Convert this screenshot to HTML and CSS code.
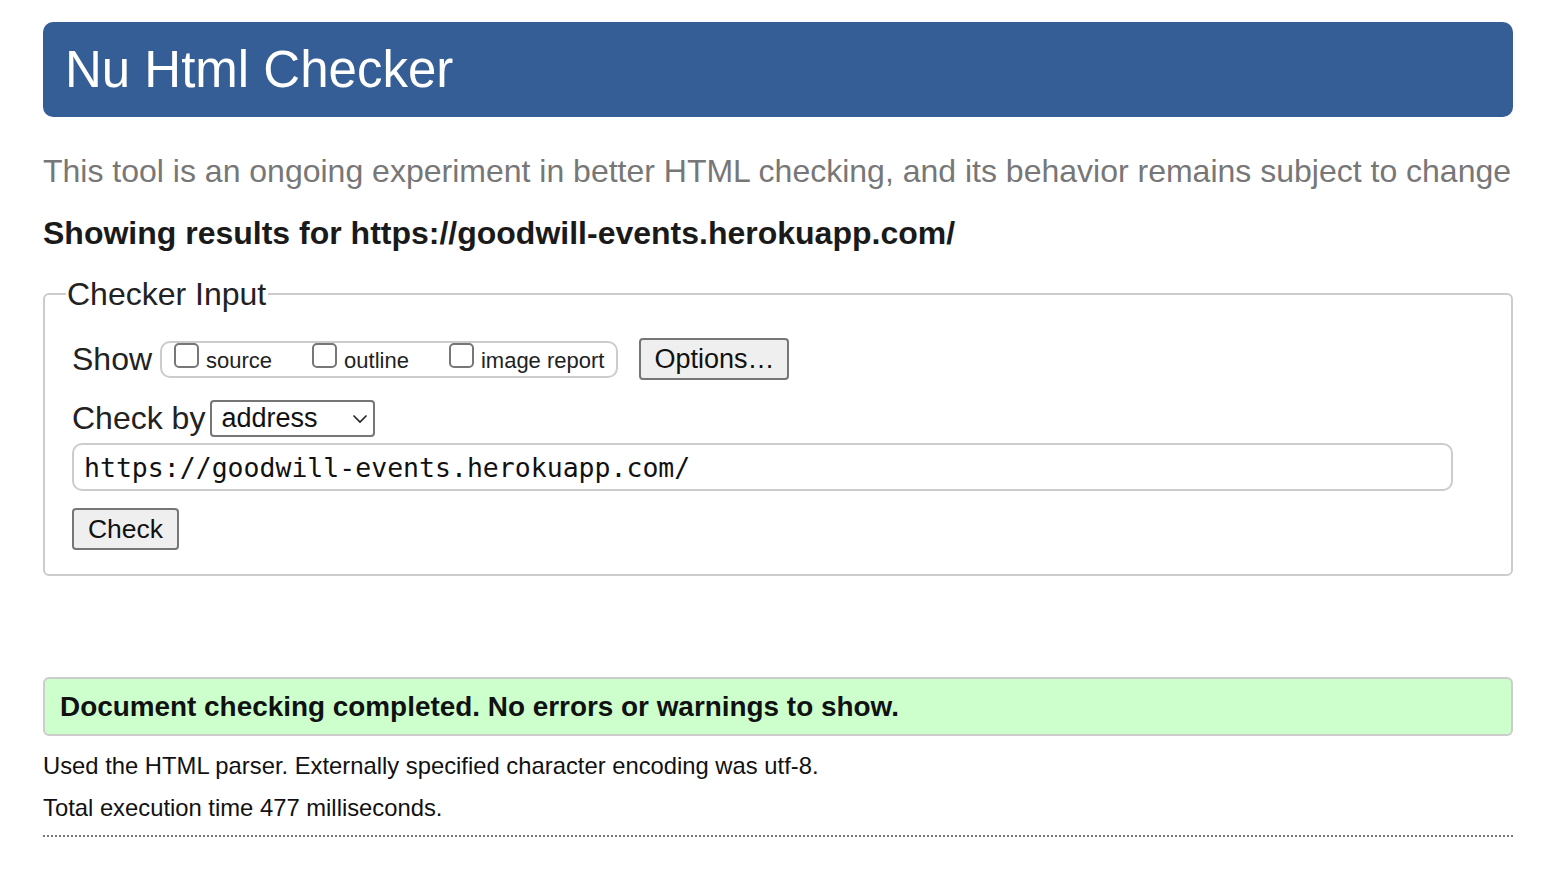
FILE: index.html
```html
<!DOCTYPE html>
<html lang="en">
<head>
<meta charset="utf-8">
<title>Nu Html Checker</title>
<link rel="stylesheet" href="styles.css">
</head>
<body>
<h1 class="banner">Nu Html Checker</h1>
<p class="intro">This tool is an ongoing experiment in better HTML checking, and its behavior remains subject to change</p>
<h2 class="showing">Showing results for https://goodwill-events.herokuapp.com/</h2>
<fieldset class="checker">
  <legend class="legend">Checker Input</legend>
  <div class="row show-row">
    <span class="row-label">Show</span>
    <div class="opts">
      <label class="opt"><input type="checkbox" class="cb"><span>source</span></label>
      <label class="opt"><input type="checkbox" class="cb"><span>outline</span></label>
      <label class="opt"><input type="checkbox" class="cb"><span>image report</span></label>
    </div>
    <button class="btn btn-options" type="button">Options…</button>
  </div>
  <div class="row by-row">
    <span class="row-label">Check by</span>
    <div class="select">
      <span>address</span>
      <svg class="chev" width="16" height="10" viewBox="0 0 16 10"><path d="M1.5 1.5 L8 8 L14.5 1.5" fill="none" stroke="#222" stroke-width="1.6"/></svg>
    </div>
  </div>
  <div class="url">https://goodwill-events.herokuapp.com/</div>
  <button class="btn btn-check" type="button">Check</button>
</fieldset>
<div class="success">Document checking completed. No errors or warnings to show.</div>
<p class="detail">Used the HTML parser. Externally specified character encoding was utf-8.</p>
<p class="detail">Total execution time 477 milliseconds.</p>
<hr class="dotted">
</body>
</html>
```
FILE: styles.css
```css
html, body {
  margin: 0;
  background: #fff;
}
body {
  padding: 22px 43px 0 43px;
  font-family: "Liberation Sans", Arial, sans-serif;
  color: #111;
}
.banner {
  margin: 0;
  height: 95px;
  box-sizing: border-box;
  background: #365e96;
  border-radius: 10px;
  color: #fff;
  font-weight: normal;
  font-size: 51px;
  line-height: 95px;
  padding-left: 22px;
}
.intro {
  margin: 36px 0 0 0;
  font-size: 32px;
  line-height: 36px;
  color: #777;
  white-space: nowrap;
}
.showing {
  margin: 26px 0 0 0;
  font-size: 32px;
  line-height: 36px;
  font-weight: bold;
  color: #1a1a1a;
}
.checker {
  margin: 25px 0 0 0;
  border: 2px solid #ccc;
  border-radius: 6px;
  padding: 23px 27px 24px 27px;
  min-width: 0;
}
.legend {
  font-size: 32px;
  line-height: 36px;
  padding: 0 2px 0 1px;
  margin-left: -6px;
  color: #222;
}
.row {
  display: flex;
  align-items: center;
}
.row-label {
  font-size: 32px;
  color: #222;
}
.show-row {
  height: 44px;
  margin-top: 2px;
}
.opts {
  display: flex;
  align-items: center;
  margin-left: 8px;
  border: 2px solid #ccc;
  border-radius: 10px;
  height: 37px;
  box-sizing: border-box;
  padding: 0 12px 0 12px;
  gap: 40px;
}
.opt {
  display: flex;
  align-items: center;
  font-size: 22px;
  color: #222;
}
.opt span {
  margin-left: 7px;
  position: relative;
  top: 2px;
}
.cb {
  appearance: none;
  -webkit-appearance: none;
  margin: 0;
  width: 25px;
  height: 25px;
  border: 2px solid #777;
  border-radius: 5px;
  background: #fff;
  position: relative;
  top: -4px;
}
.btn {
  font-family: "Liberation Sans", Arial, sans-serif;
  background: #efefef;
  border: 2px solid #767676;
  border-radius: 4px;
  color: #111;
  padding: 0;
  box-sizing: border-box;
}
.btn-options {
  margin-left: 21px;
  width: 150px;
  height: 42px;
  font-size: 27px;
}
.by-row {
  margin-top: 19px;
  height: 37px;
}
.select {
  margin-left: 5px;
  width: 165px;
  height: 37px;
  box-sizing: border-box;
  border: 2px solid #767676;
  border-radius: 4px;
  display: flex;
  align-items: center;
  justify-content: space-between;
  padding: 0 5px 0 9px;
  font-size: 27px;
  color: #111;
}
.url {
  margin-top: 6px;
  width: 1381px;
  height: 48px;
  box-sizing: border-box;
  border: 2px solid #ccc;
  border-radius: 10px;
  padding-left: 10px;
  display: flex;
  align-items: center;
  font-family: "DejaVu Sans Mono", monospace;
  font-size: 26.5px;
  color: #111;
}
.btn-check {
  margin-top: 17px;
  width: 107px;
  height: 42px;
  font-size: 26.5px;
  display: block;
}
.success {
  margin-top: 101px;
  height: 59px;
  box-sizing: border-box;
  background: #ccffcc;
  border: 2px solid #ccc;
  border-radius: 6px;
  padding-left: 15px;
  display: flex;
  align-items: center;
  font-size: 27.9px;
  font-weight: bold;
  color: #111;
}
.detail {
  margin: 16px 0 0 0;
  font-size: 23.8px;
  line-height: 28px;
  color: #111;
}
.detail + .detail {
  margin-top: 14px;
}
.dotted {
  margin: 13px 0 0 0;
  border: 0;
  border-top: 2px dotted #777;
  height: 0;
}
```
